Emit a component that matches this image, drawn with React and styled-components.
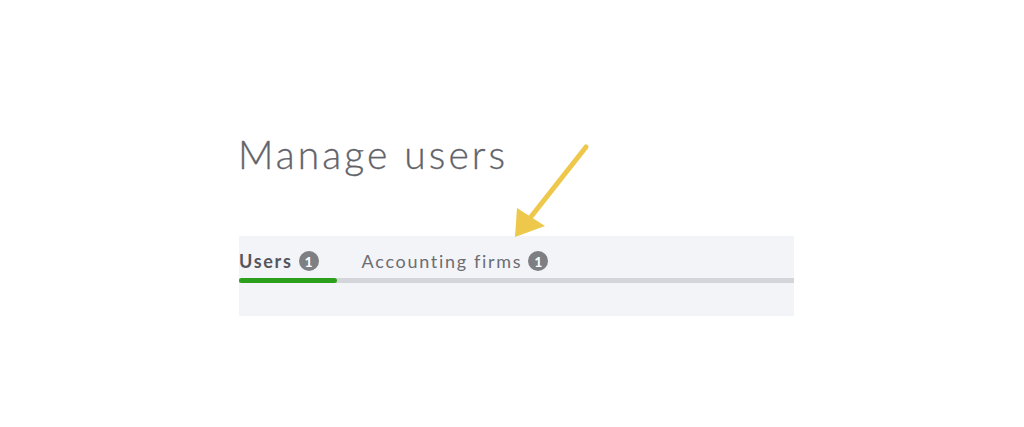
import React from 'react';
import styled, { createGlobalStyle } from 'styled-components';

const GlobalStyle = createGlobalStyle`
  html, body {
    margin: 0;
    padding: 0;
    background: #ffffff;
  }
  body {
    font-family: "Lato", "Open Sans", sans-serif;
  }
`;

const Page = styled.div`
  position: relative;
  width: 1024px;
  height: 427px;
  overflow: hidden;
  padding: 128px 230px 0 238px;
  box-sizing: border-box;
`;

const Title = styled.h1`
  margin: 0;
  font-family: "Lato", sans-serif;
  font-weight: 300;
  font-size: 39px;
  letter-spacing: 3.1px;
  line-height: 53px;
  color: #626369;
  -webkit-text-stroke: 0.3px #626369;
`;

const Panel = styled.div`
  margin-top: 55px;
  margin-left: 1px;
  width: 555px;
  height: 80px;
  background: #f3f4f8;
  display: flex;
  flex-direction: column;
`;

const TabRow = styled.div`
  display: flex;
  align-items: center;
  gap: 43px;
  height: 47px;
  padding-top: 8px;
  box-sizing: border-box;
  border-bottom: 5px solid #d4d5da;
`;

const Tab = styled.div`
  position: relative;
  display: flex;
  align-items: center;
  gap: 6px;
  height: 100%;
  font-family: "Lato", sans-serif;
  font-size: 18px;
  letter-spacing: 1.7px;
  font-weight: ${p => (p.$active ? 700 : 400)};
  color: ${p => (p.$active ? '#55565b' : '#6c6d72')};
  &::after {
    content: '';
    display: ${p => (p.$active ? 'block' : 'none')};
    position: absolute;
    left: 0;
    right: -18px;
    bottom: -5px;
    height: 5px;
    border-radius: 3px;
    background: #2ca01c;
  }
`;

const Badge = styled.span`
  display: inline-flex;
  align-items: center;
  justify-content: center;
  width: 20px;
  height: 20px;
  border-radius: 50%;
  background: #7e7f83;
  color: #ffffff;
  font-family: "Lato", sans-serif;
  font-size: 14px;
  letter-spacing: 0;
  font-weight: 700;
`;

const Arrow = styled.svg`
  position: absolute;
  left: 500px;
  top: 135px;
`;

export default function App() {
  return (
    <>
      <GlobalStyle />
      <Page>
        <Title>Manage users</Title>
        <Panel>
          <TabRow>
            <Tab $active>
              Users <Badge>1</Badge>
            </Tab>
            <Tab>
              Accounting firms <Badge>1</Badge>
            </Tab>
          </TabRow>
        </Panel>
        <Arrow width="100" height="110" viewBox="0 0 100 110">
          <line x1="86" y1="12" x2="30" y2="83" stroke="#eec84b" strokeWidth="5" strokeLinecap="round" />
          <polygon points="15,102 17,73 45,91" fill="#eec84b" />
        </Arrow>
      </Page>
    </>
  );
}
